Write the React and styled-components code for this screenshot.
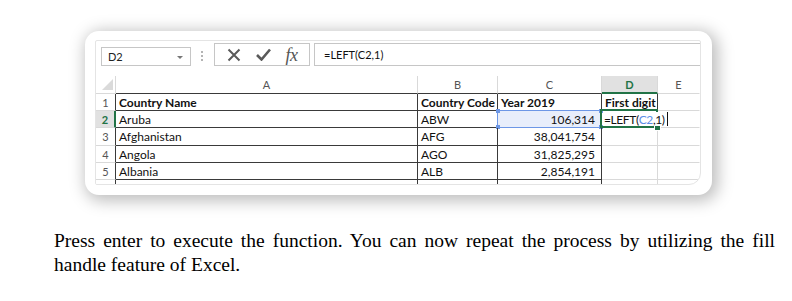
import styled, { createGlobalStyle } from 'styled-components';

const GlobalStyle = createGlobalStyle`
  html, body {
    margin: 0;
    padding: 0;
    background: #ffffff;
  }
  body {
    width: 792px;
    height: 301px;
    overflow: hidden;
  }
`;

const Page = styled.div`
  padding: 31px 0 0 0;
`;

const Card = styled.div`
  margin-left: 85px;
  width: 627px;
  height: 164px;
  box-sizing: border-box;
  padding: 9px 11px 10px 10px;
  background: #ffffff;
  border-radius: 14px;
  box-shadow: 3px 3px 16px 3px rgba(0, 0, 0, 0.26);
`;

const Sheet = styled.div`
  height: 100%;
  box-sizing: border-box;
  border: 1px solid #e4e4e4;
  border-radius: 2px 2px 12px 2px;
  overflow: hidden;
  display: flex;
  flex-direction: column;
  font-family: Lato, "Open Sans", sans-serif;
  color: #111;
`;

/* ---------- formula bar ---------- */

const FormulaBar = styled.div`
  height: 27px;
  flex: none;
  display: flex;
  align-items: flex-start;
  padding-left: 5px;
`;

const NameBox = styled.div`
  margin-top: 6px;
  width: 90px;
  height: 19px;
  box-sizing: border-box;
  border: 1px solid #c6c6c6;
  display: flex;
  align-items: center;
  justify-content: space-between;
  padding: 0 7px 0 6px;
  font-size: 11px;
  color: #222;
`;

const DropArrow = styled.span`
  width: 0;
  height: 0;
  border-left: 3px solid transparent;
  border-right: 3px solid transparent;
  border-top: 3px solid #777;
  margin-top: 1px;
`;

const Grip = styled.div`
  margin: 10px 0 0 10px;
  width: 0;
  height: 10px;
  border-left: 2px dotted #b4b4b4;
`;

const IconBox = styled.div`
  margin: 2px 0 0 11px;
  width: 96px;
  height: 23px;
  box-sizing: border-box;
  border: 1px solid #c6c6c6;
  display: flex;
  align-items: center;
  justify-content: space-around;
  padding: 0 4px;
`;

const Fx = styled.span`
  font-family: "Liberation Serif", serif;
  font-style: italic;
  font-size: 18px;
  color: #555;
  letter-spacing: -0.5px;
  line-height: 1;
`;

const FormulaInput = styled.div`
  margin: 2px 0 0 4px;
  flex: 1;
  height: 23px;
  box-sizing: border-box;
  border: 1px solid #c6c6c6;
  border-right: none;
  display: flex;
  align-items: center;
  padding-left: 9px;
  font-size: 11px;
  color: #111;
`;

/* ---------- grid ---------- */

const Grid = styled.div`
  margin-top: 8px;
  display: grid;
  grid-template-columns: 20px 302px 80px 104px 56px 42px;
  grid-template-rows: 18px 17px 17px 18px 17px 17px 6px;
`;

const Cell = styled.div`
  position: relative;
  box-sizing: border-box;
  border-right: ${(p) => p.$rw || 1}px solid ${(p) => p.$r || '#d9d9d9'};
  border-bottom: ${(p) => p.$bw || 1}px solid ${(p) => p.$b || '#d9d9d9'};
  background: ${(p) => p.$bg || 'transparent'};
  display: flex;
  align-items: center;
  justify-content: ${(p) => (p.$num ? 'flex-end' : 'flex-start')};
  padding: 0 ${(p) => (p.$num ? '6px' : '0')} 0 ${(p) => (p.$num ? '0' : '3px')};
  font-size: 12px;
  font-weight: ${(p) => (p.$bold ? 700 : 400)};
  white-space: nowrap;
  z-index: ${(p) => (p.$top ? 2 : 1)};
`;

const HeadCell = styled(Cell)`
  justify-content: center;
  padding: 0;
  font-size: 11px;
  color: ${(p) => (p.$active ? '#217346' : '#555')};
  font-weight: ${(p) => (p.$active ? 700 : 400)};
  background: ${(p) => (p.$active ? '#e1e1e1' : '#ffffff')};
`;

const Corner = styled.div`
  box-sizing: border-box;
  border-right: 1px solid #d9d9d9;
  border-bottom: 1px solid #d9d9d9;
  display: flex;
  align-items: flex-end;
  justify-content: flex-end;
  padding: 0 2px 3px 0;
`;

const RangeMark = styled.div`
  position: absolute;
  inset: -1px -1px -1px -1px;
  border: 1px solid #6d97e6;
  pointer-events: none;

  span {
    position: absolute;
    width: 4px;
    height: 4px;
    background: #6d97e6;
  }
`;

const ActiveMark = styled.div`
  position: absolute;
  inset: -2px -1px -1px -2px;
  border: 2px solid #217346;
  pointer-events: none;
`;

const FillHandle = styled.div`
  position: absolute;
  right: -4px;
  bottom: -4px;
  width: 5px;
  height: 5px;
  background: #217346;
  border: 1px solid #fff;
`;

const Editor = styled.span`
  position: relative;
  z-index: 3;
  margin-left: -1px;
  padding-right: 1px;
  background: #ffffff;
  letter-spacing: -0.4px;
  display: flex;
  align-items: center;
  height: 14px;
`;

const Ref = styled.span`
  color: #5b8ee6;
`;

const Caret = styled.span`
  display: inline-block;
  width: 1px;
  height: 14px;
  background: #111;
  margin-left: 2px;
`;

/* ---------- caption ---------- */

const Caption = styled.div`
  margin: 34px 0 0 54px;
  width: 721px;
  font-family: "Liberation Serif", "Times New Roman", serif;
  font-size: 19.5px;
  line-height: 24px;
  color: #000;
`;

const Line = styled.div`
  text-align: ${(p) => (p.$justify ? 'justify' : 'left')};
  text-align-last: ${(p) => (p.$justify ? 'justify' : 'auto')};
  white-space: nowrap;
`;

const CrossIcon = () => (
  <svg width="14" height="14" viewBox="0 0 14 14">
    <path d="M1.5 1.5 L12.5 12.5 M12.5 1.5 L1.5 12.5" stroke="#5a5a5a" strokeWidth="2" fill="none" />
  </svg>
);

const CheckIcon = () => (
  <svg width="15" height="13" viewBox="0 0 15 13">
    <path d="M1 7 L5.5 11.5 L14 1.5" stroke="#5a5a5a" strokeWidth="2.6" fill="none" />
  </svg>
);

const CornerTriangle = () => (
  <svg width="11" height="11" viewBox="0 0 11 11">
    <polygon points="11,0 11,11 0,11" fill="#dadada" />
  </svg>
);

const DARK = '#3a3a3a';
const GREEN = '#217346';

const rows = [
  { n: 1, a: 'Country Name', b: 'Country Code', c: 'Year 2019', d: 'First digit', bold: true },
  { n: 2, a: 'Aruba', b: 'ABW', c: '106,314' },
  { n: 3, a: 'Afghanistan', b: 'AFG', c: '38,041,754' },
  { n: 4, a: 'Angola', b: 'AGO', c: '31,825,295' },
  { n: 5, a: 'Albania', b: 'ALB', c: '2,854,191' },
];

const cols = ['A', 'B', 'C', 'D', 'E'];

const App = () => {
  return (
    <Page>
      <GlobalStyle />
      <Card>
        <Sheet>
          <FormulaBar>
            <NameBox>
              D2
              <DropArrow />
            </NameBox>
            <Grip />
            <IconBox>
              <CrossIcon />
              <CheckIcon />
              <Fx>fx</Fx>
            </IconBox>
            <FormulaInput>=LEFT(C2,1)</FormulaInput>
          </FormulaBar>

          <Grid>
            <Corner>
              <CornerTriangle />
            </Corner>
            {cols.map((c) => (
              <HeadCell
                key={c}
                $active={c === 'D'}
                $b={c === 'D' ? GREEN : c === 'E' ? '#d9d9d9' : DARK}
                $bw={c === 'D' ? 2 : 1}
                $r={c === 'E' ? 'transparent' : '#d9d9d9'}
              >
                {c}
              </HeadCell>
            ))}

            {rows.map((r) => {
              const active = r.n === 2;
              return [
                <HeadCell
                  key={`h${r.n}`}
                  $active={active}
                  $r={active ? GREEN : DARK}
                  $rw={active ? 2 : 1}
                >
                  {r.n}
                </HeadCell>,
                <Cell key={`a${r.n}`} $r={DARK} $b={DARK} $bold={r.bold}>
                  {r.a}
                </Cell>,
                <Cell key={`b${r.n}`} $r={DARK} $b={DARK} $bold={r.bold}>
                  {r.b}
                </Cell>,
                <Cell
                  key={`c${r.n}`}
                  $r={DARK}
                  $b={DARK}
                  $bold={r.bold}
                  $num={!r.bold}
                  $bg={active ? '#e8eefb' : undefined}
                >
                  {r.c}
                  {active && (
                    <RangeMark>
                      <span style={{ left: -2, top: -2 }} />
                      <span style={{ right: -2, top: -2 }} />
                      <span style={{ left: -2, bottom: -2 }} />
                      <span style={{ right: -2, bottom: -2 }} />
                    </RangeMark>
                  )}
                </Cell>,
                active ? (
                  <Cell key={`d${r.n}`} $r={GREEN} $b={GREEN} $top>
                    <ActiveMark />
                    <FillHandle />
                    <Editor>
                      =LEFT(<Ref>C2</Ref>,1)
                      <Caret />
                    </Editor>
                  </Cell>
                ) : (
                  <Cell
                    key={`d${r.n}`}
                    $r={r.n === 1 ? DARK : '#d9d9d9'}
                    $b={r.n === 1 ? GREEN : '#d9d9d9'}
                    $bold={r.bold}
                  >
                    {r.d}
                  </Cell>
                ),
                <Cell key={`e${r.n}`} $r="transparent" />,
              ];
            })}

            <HeadCell $r={DARK} $b="transparent" />
            <Cell $r={DARK} $b="transparent" />
            <Cell $r={DARK} $b="transparent" />
            <Cell $r={DARK} $b="transparent" />
            <Cell $b="transparent" />
            <Cell $r="transparent" $b="transparent" />
          </Grid>
        </Sheet>
      </Card>

      <Caption>
        <Line $justify>
          Press enter to execute the function. You can now repeat the process by utilizing the fill
        </Line>
        <Line>handle feature of Excel.</Line>
      </Caption>
    </Page>
  );
};

export default App;
